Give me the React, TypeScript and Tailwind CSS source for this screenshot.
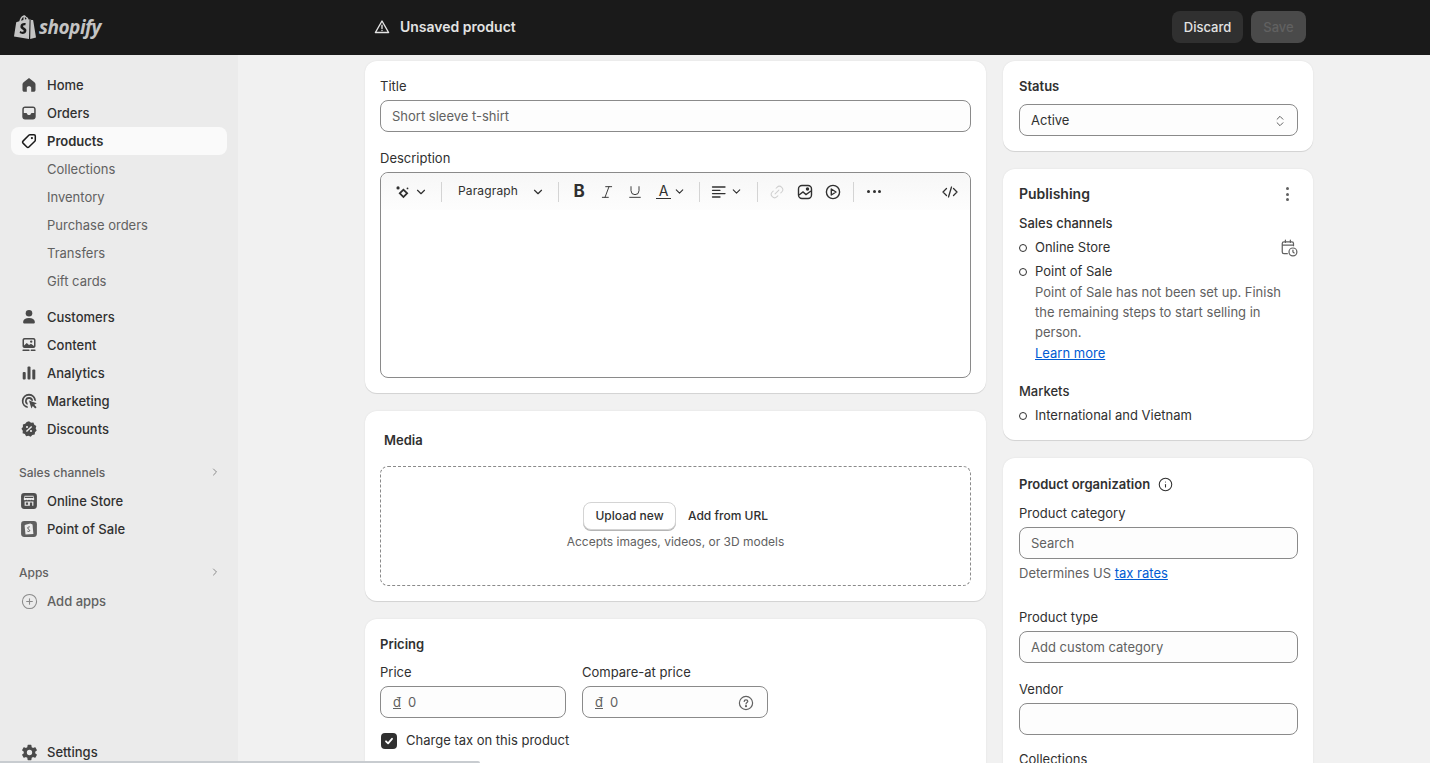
import { ReactNode } from 'react'
import { ChevronDown, ChevronRight, ChevronsUpDown, CirclePlus, Info, Italic, Link2, Underline } from 'lucide-react'
import { IoSettingsSharp } from 'react-icons/io5'

const Svg = ({ children, className = 'w-5 h-5' }: { children: ReactNode; className?: string }) => (
  <svg viewBox="0 0 20 20" className={className} fill="currentColor">
    {children}
  </svg>
)

const HomeIcon = () => (
  <Svg>
    <path d="M10 3 L4.6 7.2 C3.9 7.7 3.5 8.4 3.5 9.3 V15 C3.5 16 4.3 16.8 5.3 16.8 H7.8 V12.8 C7.8 11.9 8.6 11.2 10 11.2 C11.4 11.2 12.2 11.9 12.2 12.8 V16.8 H14.7 C15.7 16.8 16.5 16 16.5 15 V9.3 C16.5 8.4 16.1 7.7 15.4 7.2 Z" />
  </Svg>
)

const OrdersIcon = () => (
  <Svg>
    <path fillRule="evenodd" d="M6 3.5 H14 C15.6 3.5 16.7 4.7 16.7 6.2 V13.8 C16.7 15.4 15.5 16.5 14 16.5 H6 C4.4 16.5 3.3 15.3 3.3 13.8 V6.2 C3.3 4.6 4.5 3.5 6 3.5 Z M6 5 C5.3 5 4.8 5.5 4.8 6.2 V10 H6.8 C7.6 10 8 10.4 8.2 11 C8.4 11.6 9 12 10 12 C11 12 11.6 11.6 11.8 11 C12 10.4 12.4 10 13.2 10 H15.2 V6.2 C15.2 5.5 14.7 5 14 5 Z" />
  </Svg>
)

const TagIcon = () => (
  <Svg>
    <path fill="none" stroke="currentColor" strokeWidth="1.5" strokeLinejoin="round" d="M11 3.7 H15 C15.7 3.7 16.3 4.3 16.3 5 V9 C16.3 9.5 16.1 9.9 15.8 10.2 L9.9 16 C9.3 16.6 8.5 16.6 7.9 16 L4 12.1 C3.4 11.5 3.4 10.7 4 10.1 L9.8 4.2 C10.1 3.9 10.5 3.7 11 3.7 Z" />
    <circle cx="12.9" cy="7.1" r="1.1" />
  </Svg>
)

const PersonIcon = () => (
  <Svg>
    <circle cx="10" cy="6.3" r="3.3" />
    <path d="M10 11 C6.6 11 4.3 12.6 4.1 15 C4 15.9 4.6 16.5 5.4 16.5 H14.6 C15.4 16.5 16 15.9 15.9 15 C15.7 12.6 13.4 11 10 11 Z" />
  </Svg>
)

const ContentIcon = () => (
  <Svg>
    <path fillRule="evenodd" d="M5.5 3 H14.5 C15.6 3 16.5 3.9 16.5 5 V11 C16.5 12.1 15.6 13 14.5 13 H5.5 C4.4 13 3.5 12.1 3.5 11 V5 C3.5 3.9 4.4 3 5.5 3 Z M5 10.6 L7.8 8 L10 10 L12 8.8 L15 11 V5.2 C15 4.8 14.7 4.5 14.3 4.5 H5.7 C5.3 4.5 5 4.8 5 5.2 Z M12.2 5.4 A1.2 1.2 0 1 0 12.21 7.8 A1.2 1.2 0 1 0 12.2 5.4 Z" />
    <rect x="3.5" y="14.5" width="7" height="1.6" rx=".5" />
    <rect x="11.7" y="14.5" width="4.8" height="1.6" rx=".5" />
  </Svg>
)

const BarsIcon = () => (
  <Svg>
    <rect x="3.7" y="9" width="3" height="7.5" rx="1" />
    <rect x="8.5" y="3.5" width="3" height="13" rx="1" />
    <rect x="13.3" y="6.5" width="3" height="10" rx="1" />
  </Svg>
)

const MarketingIcon = () => (
  <Svg>
    <path d="M10 2.8 A7.2 7.2 0 0 0 8.8 17.1 L8.6 15.3 A5.4 5.4 0 1 1 15.3 9.4 L17.1 10 A7.2 7.2 0 0 0 10 2.8 Z" />
    <path d="M10 6 A4 4 0 0 0 8.8 13.8 L8.5 11.8 A2.2 2.2 0 1 1 12 9.4 L14 10 A4 4 0 0 0 10 6 Z" />
    <path d="M10 9.5 L17.8 12.3 L15.3 13.7 L17.6 16.2 L16.2 17.6 L13.8 15.1 L12.4 17.6 Z" />
  </Svg>
)

const DiscountIcon = () => (
  <Svg>
    <path fillRule="evenodd" d="M10 2.3 L12 3.7 L14.4 3.5 L15.3 5.7 L17.3 7 L16.7 9.4 L17.7 11.6 L16 13.2 L15.7 15.6 L13.3 15.9 L11.7 17.7 L9.5 16.7 L7.1 17.2 L5.9 15.1 L3.6 14.2 L3.8 11.8 L2.4 9.8 L3.9 7.9 L3.9 5.5 L6.2 4.8 L7.7 2.9 Z M12.2 7 L6.9 12.1 L7.9 13.1 L13.2 8 Z M8 6.9 A1.1 1.1 0 1 0 8.01 9.1 A1.1 1.1 0 1 0 8 6.9 Z M12 10.9 A1.1 1.1 0 1 0 12.01 13.1 A1.1 1.1 0 1 0 12 10.9 Z" />
  </Svg>
)

const StoreIcon = () => (
  <svg viewBox="0 0 20 20" className="w-4 h-4 scale-[1.1]">
    <rect x="1" y="1" width="18" height="18" rx="3.5" fill="#4f4f4f" />
    <path d="M5 4 H15 L16 7.6 C16 9 14.4 9.4 13 8.6 C12 9.3 11 9.3 10 8.6 C9 9.3 8 9.3 7 8.6 C5.6 9.4 4 9 4 7.6 Z M5.4 5.2 L5.1 6.6 H14.9 L14.6 5.2 Z" fill="#ebebeb" fillRule="evenodd" />
    <path d="M5 10.5 H15 V15.5 H5 Z M6.4 11.8 V14.2 H9 V11.8 Z M11 11.8 V15.5 H13.6 V11.8 Z" fill="#ebebeb" fillRule="evenodd" />
  </svg>
)

const PosIcon = () => (
  <svg viewBox="0 0 20 20" className="w-4 h-4 scale-[1.1]">
    <rect x="1" y="1" width="18" height="18" rx="3.5" fill="#5f5f5f" />
    <path d="M6 5.2 L11.5 3.8 L14 4.8 L15 15.8 L6 16.2 L5 6 Z" fill="#ebebeb" />
    <path d="M10.8 7.6 C9.6 7.3 8.6 7.9 8.6 8.9 C8.6 10.4 10.8 10.4 10.8 11.8 C10.8 13 9.2 13 8.2 12.4" fill="none" stroke="#4f4f4f" strokeWidth="1.1" />
  </svg>
)

const ShopifyBag = () => (
  <svg viewBox="0 0 22 24" className="w-[22px] h-6" fill="#c4c4c4">
    <path d="M15.6 4.2 L14.6 4.5 C14.2 3.2 13.5 2.2 12.4 2 C11.6 .6 10.4 .1 9.4 .5 C7.2 1.2 5.8 3.9 5.3 6.2 L2.9 7 C2.2 7.2 2.2 7.2 2.1 7.9 L0 21.4 L15 24 Z M9.4 5 L7.1 5.7 C7.5 4.1 8.3 2.6 9.5 2 C9.5 2.6 9.5 3.7 9.4 5 Z M11 4.5 C11 3.4 10.9 2.6 10.7 2 C11.6 2.4 12.2 3.2 12.7 4 Z" />
    <path d="M16.6 4.1 L16.2 24 L22 22.6 L19.2 5.4 C19.1 5.1 18.9 5 18.7 5 L17.3 4.9 L16.6 4.1 Z" />
    <path d="M11.8 8.3 C10.1 7.6 6.5 8.1 6.4 11.4 C6.3 14.4 9.9 14.4 9.8 16 C9.7 17 8 17 6.2 15.9 L5.6 18.1 C7.6 19.4 12 19.4 12.4 15.8 C12.7 12.9 9 12.7 9.1 11.3 C9.2 10.3 10.5 10.2 11.2 10.5 Z" fill="#1a1a1a" />
  </svg>
)

const nav = [
  { label: 'Home', icon: <HomeIcon /> },
  { label: 'Orders', icon: <OrdersIcon /> },
]

const productLinks = ['Collections', 'Inventory', 'Purchase orders', 'Transfers', 'Gift cards']

const nav2 = [
  { label: 'Customers', icon: <PersonIcon /> },
  { label: 'Content', icon: <ContentIcon /> },
  { label: 'Analytics', icon: <BarsIcon /> },
  { label: 'Marketing', icon: <MarketingIcon /> },
  { label: 'Discounts', icon: <DiscountIcon /> },
]

function NavRow({ label, icon }: { label: string; icon: ReactNode }) {
  return (
    <div className="flex items-center h-7 pl-[19px] text-[13px] font-medium text-[#303030]">
      <span className="w-5 h-5 flex items-center justify-center text-[#4a4a4a]">{icon}</span>
      <span className="ml-2 pt-[2px]">{label}</span>
    </div>
  )
}

function SectionRow({ label }: { label: string }) {
  return (
    <div className="flex items-center justify-between h-7 mb-px pl-[19px] pr-[17px] text-xs font-medium text-[#616161]">
      <span className="pt-[2px]">{label}</span>
      <ChevronRight className="w-3 h-3 text-[#8a8a8a]" />
    </div>
  )
}

function Sidebar() {
  return (
    <aside className="w-[238px] shrink-0 bg-[#ebebeb] pt-4 overflow-hidden">
      {nav.map((item) => (
        <NavRow key={item.label} {...item} />
      ))}
      <div className="flex items-center h-7 mx-[11px] pl-2 rounded-lg bg-[#fafafa] text-[13px] font-semibold text-[#303030]">
        <span className="w-5 h-5 text-[#1a1a1a]">
          <TagIcon />
        </span>
        <span className="ml-2 pt-[2px]">Products</span>
      </div>
      {productLinks.map((label) => (
        <div key={label} className="flex items-center h-7 pt-[2px] pl-[47px] text-[13px] text-[#616161]">
          {label}
        </div>
      ))}
      <div className="h-[8px]" />
      {nav2.map((item) => (
        <NavRow key={item.label} {...item} />
      ))}
      <div className="mt-[15px]">
        <SectionRow label="Sales channels" />
        <NavRow label="Online Store" icon={<StoreIcon />} />
        <NavRow label="Point of Sale" icon={<PosIcon />} />
      </div>
      <div className="mt-[15px]">
        <SectionRow label="Apps" />
        <div className="flex items-center h-7 pl-[19px] text-[13px] font-medium text-[#616161]">
          <CirclePlus className="w-[17px] h-[17px] mx-[1.5px] text-[#8a8a8a]" strokeWidth={1.5} />
          <span className="ml-2 pt-[2px]">Add apps</span>
        </div>
      </div>
      <div className="mt-[123px]">
        <NavRow label="Settings" icon={<IoSettingsSharp className="w-[17px] h-[17px]" />} />
      </div>
    </aside>
  )
}

function Card({ children, className = '' }: { children: ReactNode; className?: string }) {
  return <section className={`shrink-0 bg-white rounded-xl shadow-[0_1px_0_#d4d4d4,0_0_2px_rgba(0,0,0,0.08)] ${className}`}>{children}</section>
}

function Field({ text, className = '', children }: { text?: string; className?: string; children?: ReactNode }) {
  return (
    <div className={`flex items-center h-8 pl-[11px] pr-3 pt-px rounded-lg border border-[#8a8a8a] bg-[#fdfdfd] text-[13px] text-[#616161] ${className}`}>
      {text}
      {children}
    </div>
  )
}

function Label({ children, className = '' }: { children: ReactNode; className?: string }) {
  return <div className={`h-5 leading-5 text-[13px] text-[#303030] ${className}`}>{children}</div>
}

const Sep = () => <span className="w-px h-5 bg-[#d4d4d4]" />

function Toolbar() {
  return (
    <div className="flex items-center h-[37px] pl-[13px] pr-[12px] rounded-t-lg bg-gradient-to-b from-[#f7f7f7] to-[#fdfdfd] text-[#303030]">
      <svg viewBox="0 0 20 20" className="w-[18px] h-[18px]" fill="currentColor">
        <path fillRule="evenodd" d="M10.5 6 L16 11.5 L10.5 17 L5 11.5 Z M10.5 8.8 L7.8 11.5 L10.5 14.2 L13.2 11.5 Z" />
        <circle cx="4.5" cy="5.5" r="1.8" />
        <circle cx="15" cy="6" r="1" />
      </svg>
      <ChevronDown className="w-[14px] h-[14px] ml-[2px] mr-[13px]" />
      <Sep />
      <span className="ml-4 mb-[2px] text-xs tracking-[0.15px] text-[#303030]">Paragraph</span>
      <ChevronDown className="w-[14px] h-[14px] ml-[13px] mr-[13px]" />
      <Sep />
      <span className="ml-[10px] w-5 text-center text-[17px] font-bold leading-none text-[#303030]">B</span>
      <Italic className="w-4 h-4 ml-[10px]" strokeWidth={1.4} />
      <Underline className="w-4 h-4 ml-3" strokeWidth={1.4} />
      <span className="ml-[13px] flex flex-col items-center w-[15px] leading-none">
        <span className="text-[14px] leading-[13px]">A</span>
        <span className="w-[15px] h-[1.5px] mt-px bg-[#303030]" />
      </span>
      <ChevronDown className="w-[13px] h-[13px] ml-[2px] mr-[13px]" />
      <Sep />
      <svg viewBox="0 0 16 16" className="w-4 h-4 ml-[11px]" stroke="currentColor" strokeWidth="1.3" strokeLinecap="round">
        <path d="M1.5 3 H14 M1.5 6.3 H9 M1.5 9.6 H14 M1.5 13 H9" />
      </svg>
      <ChevronDown className="w-[13px] h-[13px] ml-[3px] mr-[14px]" />
      <Sep />
      <Link2 className="w-4 h-4 ml-[11px] -rotate-45 text-[#cfcfcf]" strokeWidth={1.5} />
      <svg viewBox="0 0 16 16" className="w-4 h-4 ml-3" fill="none" stroke="currentColor" strokeWidth="1.4">
        <rect x="1.5" y="1.5" width="13" height="13" rx="3.5" />
        <path d="M2 11 L6 8 L9 10.5 L14 7" />
        <circle cx="10.5" cy="5" r="1" fill="currentColor" />
      </svg>
      <svg viewBox="0 0 16 16" className="w-4 h-4 ml-3" fill="none" stroke="currentColor" strokeWidth="1.4" strokeLinejoin="round">
        <circle cx="8" cy="8" r="6.6" />
        <path d="M6.3 5 L11 8 L6.3 11 Z" />
      </svg>
      <span className="ml-3 flex">
        <Sep />
      </span>
      <span className="ml-[13px] flex gap-[2.5px]">
        <span className="w-[3px] h-[3px] rounded-full bg-[#303030]" />
        <span className="w-[3px] h-[3px] rounded-full bg-[#303030]" />
        <span className="w-[3px] h-[3px] rounded-full bg-[#303030]" />
      </span>
      <svg viewBox="0 0 16 16" className="w-4 h-4 ml-auto" fill="none" stroke="currentColor" strokeWidth="1.3" strokeLinecap="round" strokeLinejoin="round">
        <path d="M4.5 4.5 L1 8 L4.5 11.5 M11.5 4.5 L15 8 L11.5 11.5 M9.5 3 L6.5 13" />
      </svg>
    </div>
  )
}

function MainColumn() {
  return (
    <div className="w-[621px] shrink-0 flex flex-col gap-[18px]">
      <Card className="px-[15px] pt-[15px] pb-[15px]">
        <Label>Title</Label>
        <Field text="Short sleeve t-shirt" className="mt-1" />
        <Label className="mt-4">Description</Label>
        <div className="mt-1 h-[206px] rounded-lg border border-[#8a8a8a]">
          <Toolbar />
        </div>
      </Card>

      <Card className="px-[15px] pt-[19px] pb-[15px]">
        <h2 className="ml-1 h-5 leading-5 text-[13px] font-semibold text-[#303030]">Media</h2>
        <div className="mt-4 h-[120px] flex flex-col items-center pt-[35px] rounded-lg border border-dashed border-[#8a8a8a] text-xs">
          <div className="flex items-center">
            <span className="flex items-center justify-center w-[93px] h-7 rounded-lg bg-white border border-[#d4d4d4] shadow-[0_1px_0_#b5b5b5] font-medium text-[#303030]">Upload new</span>
            <span className="ml-3 font-medium text-[#303030]">Add from URL</span>
          </div>
          <div className="mt-[4px] text-[#616161]">Accepts images, videos, or 3D models</div>
        </div>
      </Card>

      <Card className="px-[15px] pt-[15px] h-[200px]">
        <h2 className="h-5 leading-5 text-[13px] font-semibold text-[#303030]">Pricing</h2>
        <div className="mt-2 flex gap-4">
          <div className="w-[186px]">
            <Label>Price</Label>
            <Field className="mt-1">
              <span className="ml-px underline">đ</span>
              <span className="ml-[7px]">0</span>
            </Field>
          </div>
          <div className="w-[186px]">
            <Label>Compare-at price</Label>
            <Field className="mt-1 justify-between pr-[13px]">
              <span>
                <span className="ml-px underline">đ</span>
                <span className="ml-[7px]">0</span>
              </span>
              <svg viewBox="0 0 16 16" className="w-4 h-4 text-[#616161]" fill="none" stroke="currentColor" strokeWidth="1.2" strokeLinecap="round">
                <circle cx="8" cy="8" r="6.6" />
                <path d="M6.2 6.4 C6.2 5.4 7 4.8 8 4.8 C9 4.8 9.8 5.4 9.8 6.3 C9.8 7.6 8 7.6 8 9" />
                <circle cx="8" cy="11.2" r=".5" fill="currentColor" />
              </svg>
            </Field>
          </div>
        </div>
        <div className="mt-[13px] flex items-center h-5 text-[13px] text-[#303030]">
          <span className="ml-px w-4 h-4 flex items-center justify-center rounded bg-[#303030]">
            <svg viewBox="0 0 12 12" className="w-3 h-3" fill="none" stroke="#fff" strokeWidth="1.8" strokeLinecap="round" strokeLinejoin="round">
              <path d="M3 6.3 L5.1 8.4 L9 3.8" />
            </svg>
          </span>
          <span className="ml-[9px]">Charge tax on this product</span>
        </div>
      </Card>
    </div>
  )
}

const Dot = () => <span className="w-2 h-2 mr-2 shrink-0 rounded-full border border-[#303030]" />

function SideColumn() {
  return (
    <div className="w-[310px] shrink-0 flex flex-col gap-[18px]">
      <Card className="h-[90px] pl-4 pr-[15px] pt-[15px]">
        <h2 className="h-5 leading-5 text-[13px] font-semibold text-[#303030]">Status</h2>
        <Field className="mt-2 justify-between !text-[#303030] pr-[10px]">
          Active
          <ChevronsUpDown className="w-[14px] h-[14px] text-[#4a4a4a]" strokeWidth={1.5} />
        </Field>
      </Card>

      <Card className="h-[271px] pl-4 pr-[15px] pt-[15px]">
        <div className="flex items-center justify-between h-5">
          <h2 className="text-sm font-semibold text-[#303030]">Publishing</h2>
          <span className="flex flex-col gap-[2.5px] mr-[9px]">
            <span className="w-[3px] h-[3px] rounded-full bg-[#616161]" />
            <span className="w-[3px] h-[3px] rounded-full bg-[#616161]" />
            <span className="w-[3px] h-[3px] rounded-full bg-[#616161]" />
          </span>
        </div>
        <Label className="mt-[9px] font-medium">Sales channels</Label>
        <div className="mt-[5px] flex items-center justify-between h-5 text-[13px] text-[#303030]">
          <span className="flex items-center">
            <Dot />
            Online Store
          </span>
          <svg viewBox="0 0 16 16" className="w-[18px] h-[18px] text-[#616161]" fill="none" stroke="currentColor" strokeWidth="1.1" strokeLinecap="round">
            <path d="M6.5 13 H3.5 C2.6 13 2 12.4 2 11.5 V4 C2 3.1 2.6 2.5 3.5 2.5 H10.5 C11.4 2.5 12 3.1 12 4 V6 M2 5.5 H12 M4.8 1 V3 M9.2 1 V3" />
            <circle cx="11.5" cy="11.5" r="3.5" />
            <path d="M11.5 9.8 V11.6 L12.6 12.4" />
          </svg>
        </div>
        <div className="mt-1 flex items-center h-5 text-[13px] text-[#303030]">
          <Dot />
          Point of Sale
        </div>
        <p className="ml-4 leading-5 text-[13px] text-[#616161]">
          Point of Sale has not been set up. Finish the remaining steps to start selling in person.
        </p>
        <a className="block ml-4 mt-px leading-5 text-[13px] text-[#005bd3] underline">Learn more</a>
        <Label className="mt-[18px] font-medium">Markets</Label>
        <div className="mt-[5px] flex items-center h-5 text-[13px] text-[#303030]">
          <Dot />
          International and Vietnam
        </div>
      </Card>

      <Card className="h-[400px] pl-4 pr-[15px] pt-[16px]">
        <div className="flex items-center h-5 pt-px">
          <h2 className="text-[13px] font-semibold text-[#303030]">Product organization</h2>
          <Info className="ml-[8px] w-[15px] h-[15px] text-[#303030]" strokeWidth={1.7} />
        </div>
        <Label className="mt-[9px]">Product category</Label>
        <Field text="Search" className="mt-1" />
        <div className="mt-1 h-5 leading-5 text-[13px] text-[#616161]">
          Determines US <a className="text-[#005bd3] underline">tax rates</a>
        </div>
        <Label className="mt-[24px]">Product type</Label>
        <Field text="Add custom category" className="mt-1" />
        <Label className="mt-4">Vendor</Label>
        <Field className="mt-1" />
        <Label className="mt-[14px]">Collections</Label>
      </Card>
    </div>
  )
}

export default function App() {
  return (
    <div className="relative h-[763px] flex flex-col overflow-hidden bg-[#f1f1f1] [font-family:Inter,sans-serif]">
      <header className="h-[55px] pb-px shrink-0 flex items-center bg-[#1a1a1a]">
        <div className="w-[365px] pl-[14px] flex items-center">
          <ShopifyBag />
          <span className="ml-[3px] text-[19px] font-bold italic tracking-[-0.5px] text-[#c4c4c4] [font-family:'Open_Sans',sans-serif]">shopify</span>
        </div>
        <svg viewBox="0 0 16 16" className="w-4 h-4 ml-[9px] text-[#e3e3e3]" fill="none" stroke="currentColor" strokeWidth="1.4" strokeLinejoin="round" strokeLinecap="round">
          <path d="M8 2 L14.6 13.5 H1.4 Z" />
          <path d="M8 6.3 V9.5 M8 11.4 V11.5" />
        </svg>
        <span className="ml-[10px] text-sm font-semibold text-[#e3e3e3]">Unsaved product</span>
        <div className="ml-auto mr-[124px] flex gap-2 text-[13px] font-medium">
          <button className="h-8 w-[71px] pt-px rounded-lg bg-[#303030] text-[#e3e3e3]">Discard</button>
          <button className="h-8 w-[55px] pt-px rounded-lg bg-[#4a4a4a] text-[#616161]">Save</button>
        </div>
      </header>
      <div className="flex flex-1 min-h-0">
        <Sidebar />
        <main className="flex-1 flex gap-[17px] pl-[127px] pt-[6px] overflow-hidden">
          <MainColumn />
          <SideColumn />
        </main>
      </div>
      <div className="absolute left-0 bottom-0 w-[480px] h-[2px] rounded-tr-full bg-[#c8ccd0]" />
    </div>
  )
}
